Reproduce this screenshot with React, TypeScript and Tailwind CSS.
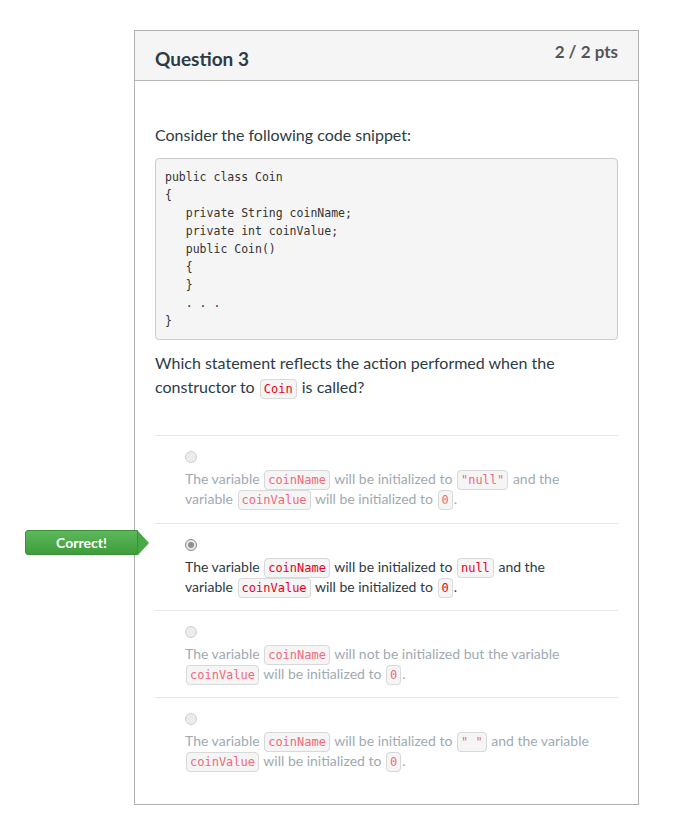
import React from "react";

const lato = { fontFamily: "Lato, 'Open Sans', sans-serif" };

function C({ children, dim }: { children: React.ReactNode; dim?: boolean }) {
  return (
    <code
      className={`inline leading-[16px] px-[3px] py-[2px] mx-[1px] rounded-[4px] border border-[#d9d9d9] bg-[#f5f5f5] text-[12px] ${dim ? "text-[#f06a7a]" : "text-[#e8001c]"}`}
      style={{ fontFamily: "'DejaVu Sans Mono', 'Liberation Mono', monospace" }}
    >
      {children}
    </code>
  );
}

function Radio({ checked }: { checked?: boolean }) {
  return (
    <div
      className={`w-[12px] h-[12px] rounded-full border ${checked ? "border-[#8a8a8a] bg-[#e8e8e8]" : "border-[#d0d0d0] bg-[#ececec]"} flex items-center justify-center`}
    >
      {checked && <div className="w-[6px] h-[6px] rounded-full bg-[#8f8f8f]" />}
    </div>
  );
}

function Answer({
  children,
  dim,
  checked,
  correct,
  first,
}: {
  children: React.ReactNode;
  dim?: boolean;
  checked?: boolean;
  correct?: boolean;
  first?: boolean;
}) {
  return (
    <div className={`relative border-t border-[#e6e6e6] pt-[15px] ${first ? "pb-[14px]" : "pb-[13px]"} pl-[30px]`}>
      {correct && (
        <div className="absolute left-[-130px] top-[6px] flex items-center">
          <div className="w-[113px] h-[25px] rounded-l-[3px] bg-gradient-to-b from-[#5cb85a] to-[#3f9d3c] text-white text-[14px] font-bold flex items-center justify-center border border-[#3a8f37]">
            Correct!
          </div>
          <div className="w-0 h-0 border-y-[12.5px] border-y-transparent border-l-[11px] border-l-[#48a845]" />
        </div>
      )}
      <Radio checked={checked} />
      <div className={`mt-[6px] text-[14px] leading-[20px] ${dim ? "text-[#a0aab2]" : "text-[#2d3b45]"}`}>
        {children}
      </div>
    </div>
  );
}

export default function App() {
  return (
    <div className="bg-white w-[689px] h-[828px] pt-[30px] pl-[134px]" style={lato}>
      <div className="w-[505px] border border-[#b0b0b0] bg-white">
        <div className="h-[50px] bg-[#f5f5f5] border-b border-[#b8b8b8] flex justify-between pl-[20px] pr-[20px]">
          <div className="text-[19px] font-bold text-[#2d3b45] pt-[14px]">Question 3</div>
          <div className="text-[17px] font-bold text-[#555] pt-[8px]">2 / 2 pts</div>
        </div>
        <div className="px-[20px] pt-[42px] pb-[20px] text-[#2d3b45]">
          <p className="text-[16px] leading-[24px]">Consider the following code snippet:</p>
          <pre
            className="mt-[11px] bg-[#f5f5f5] border border-[#ccc] rounded-[4px] px-[9px] pt-[9px] pb-[9px] text-[11.5px] leading-[18px] text-[#333]"
            style={{ fontFamily: "'DejaVu Sans Mono', 'Liberation Mono', monospace" }}
          >
{`public class Coin
{
   private String coinName;
   private int coinValue;
   public Coin()
   {
   }
   . . .
}`}
          </pre>
          <p className="mt-[11px] text-[16px] leading-[24px]">
            Which statement reflects the action performed when the
            <br />
            constructor to <C>Coin</C> is called?
          </p>
          <div className="mt-[36px]">
            <Answer dim first>
              The variable <C dim>coinName</C> will be initialized to <C dim>"null"</C> and the
              <br />
              variable <C dim>coinValue</C> will be initialized to <C dim>0</C>.
            </Answer>
            <Answer checked correct>
              The variable <C>coinName</C> will be initialized to <C>null</C> and the
              <br />
              variable <C>coinValue</C> will be initialized to <C>0</C>.
            </Answer>
            <Answer dim>
              The variable <C dim>coinName</C> will not be initialized but the variable
              <br />
              <C dim>coinValue</C> will be initialized to <C dim>0</C>.
            </Answer>
            <Answer dim>
              The variable <C dim>coinName</C> will be initialized to <C dim>" "</C> and the variable
              <br />
              <C dim>coinValue</C> will be initialized to <C dim>0</C>.
            </Answer>
          </div>
        </div>
      </div>
    </div>
  );
}
